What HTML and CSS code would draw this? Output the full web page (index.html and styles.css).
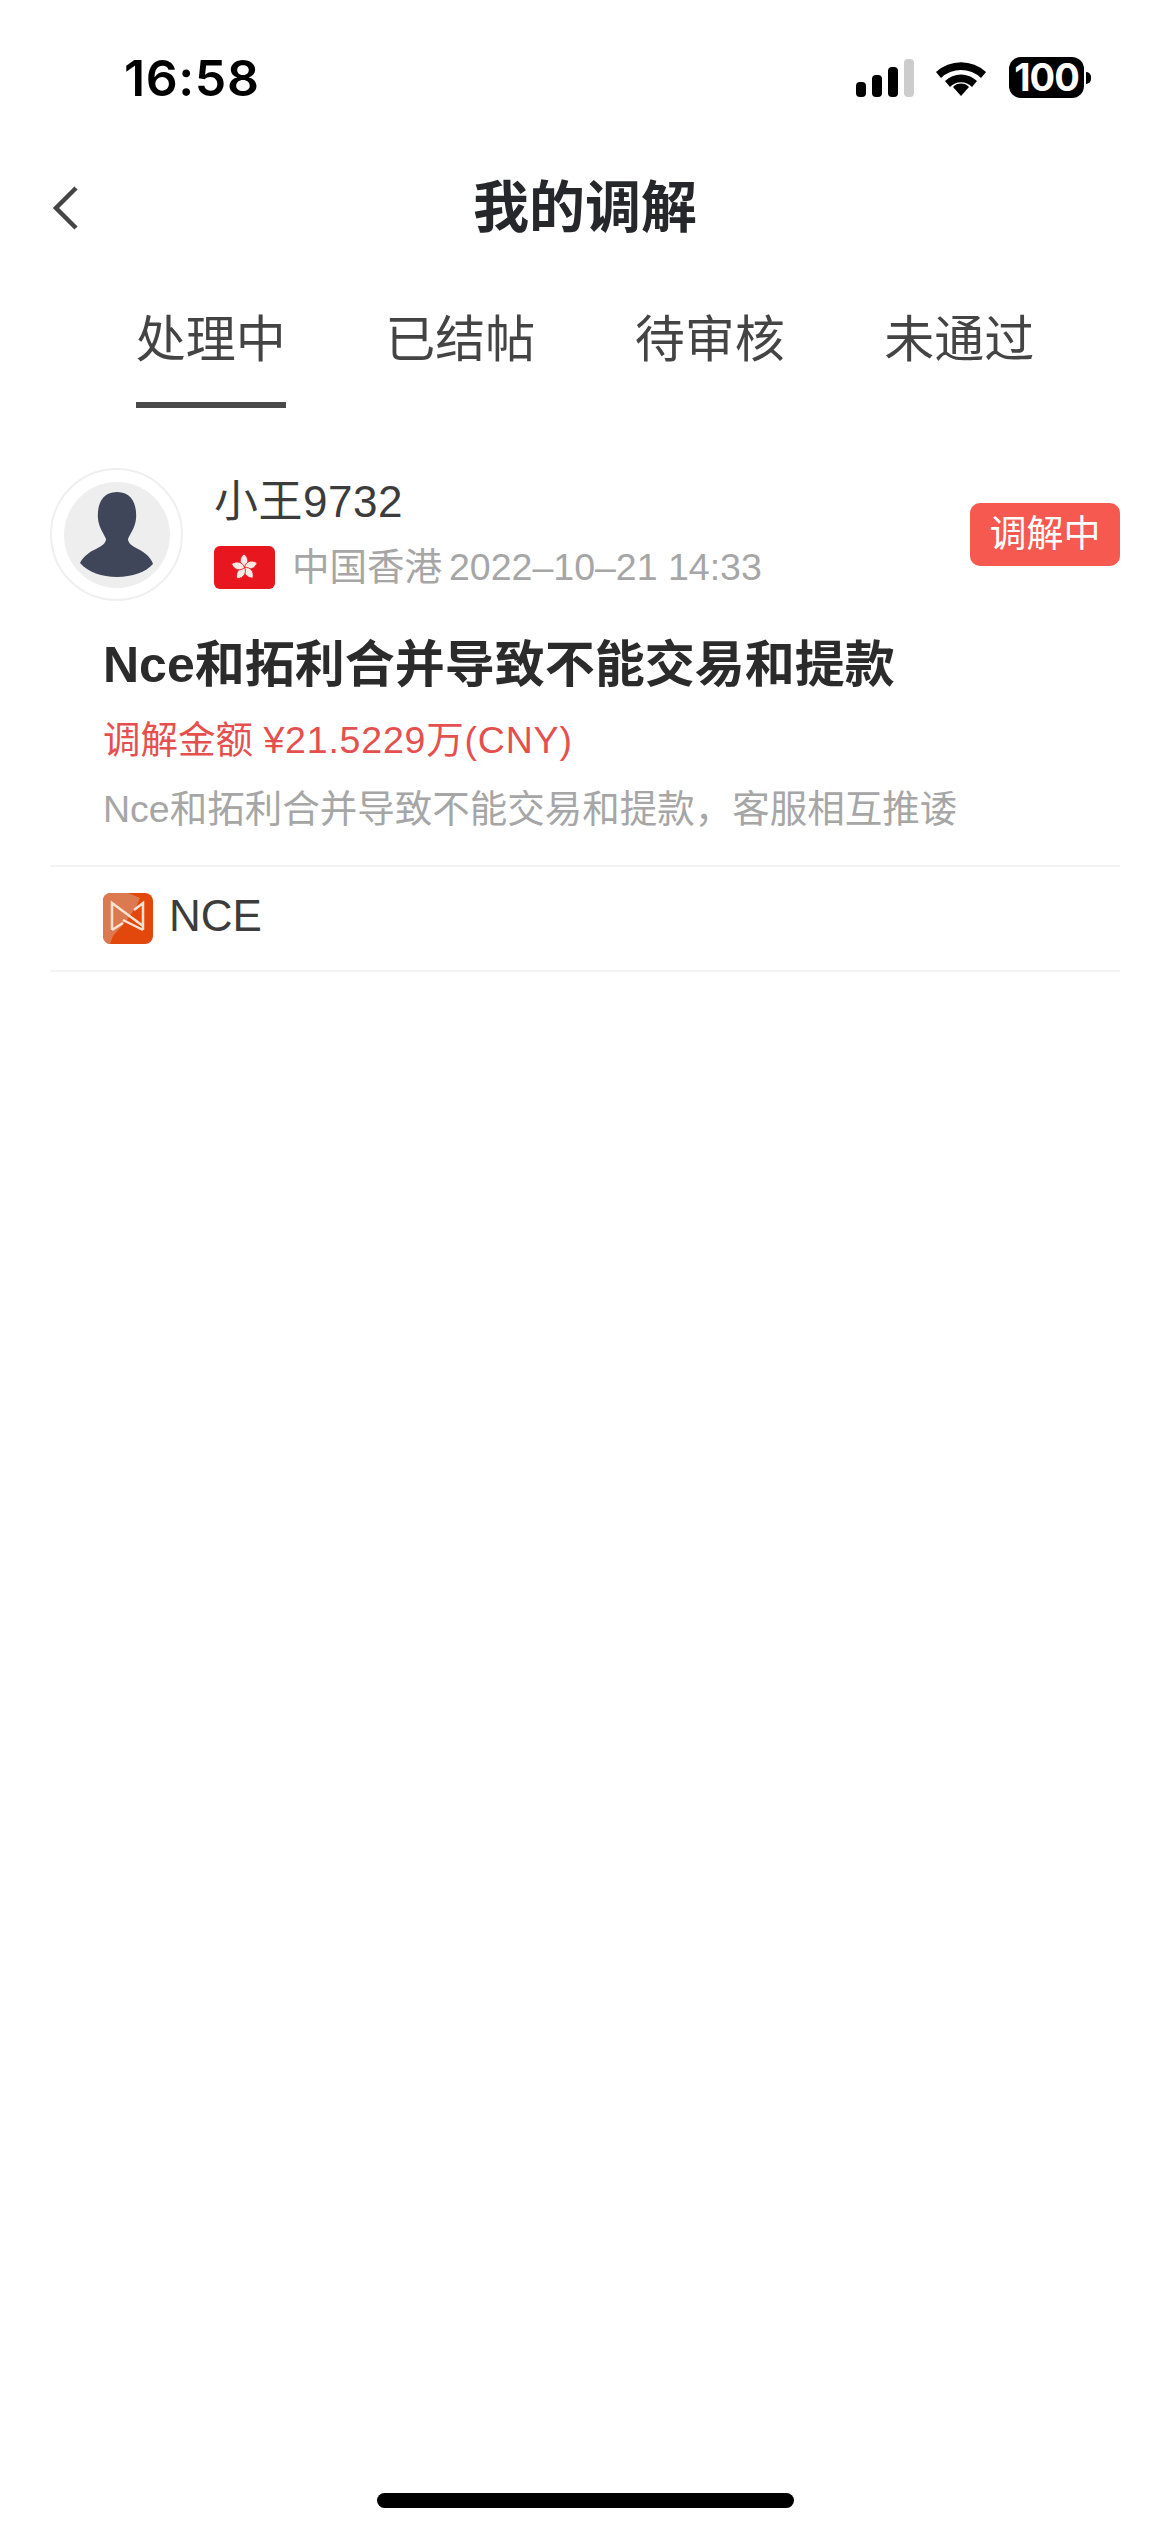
FILE: index.html
```html
<!DOCTYPE html>
<html lang="zh-CN">
<head>
    <meta charset="UTF-8">
    <meta name="viewport" content="width=device-width, initial-scale=1.0">
    <title>我的调解</title>
    <link rel="stylesheet" href="styles.css">
</head>
<body>
<div class="phone">
    <div class="status-bar">
        <span class="time">16:58</span>
        <div class="status-icons">
            <svg class="signal" width="58" height="38" viewBox="0 0 58 38">
                <rect x="0" y="23" width="10" height="15" rx="4" fill="#000"/>
                <rect x="16" y="16" width="10" height="22" rx="4" fill="#000"/>
                <rect x="32" y="8" width="10" height="30" rx="4" fill="#000"/>
                <rect x="48" y="0" width="10" height="38" rx="4" fill="#ccc"/>
            </svg>
            <svg class="wifi" width="52" height="37" viewBox="0 0 52 37">
                <path d="M1 13 A37 37 0 0 1 51 13 L46 19 A29 29 0 0 0 6 19 Z" fill="#000"/>
                <path d="M10 24 A23 23 0 0 1 42 24 L37 30 A15 15 0 0 0 15 30 Z" fill="#000" transform="translate(0 -2)"/>
                <path d="M18 28 A11 11 0 0 1 34 28 L26 37 Z" fill="#000"/>
            </svg>
            <div class="battery">
                <span class="battery-level">100</span>
                <span class="battery-nub"></span>
            </div>
        </div>
    </div>

    <div class="nav-bar">
        <svg class="back" width="27" height="44" viewBox="0 0 27 44">
            <path d="M24 2 L4 22 L24 42" fill="none" stroke="#444" stroke-width="4.5"/>
        </svg>
        <h1 class="nav-title">我的调解</h1>
    </div>

    <div class="tabs">
        <div class="tab active">处理中</div>
        <div class="tab">已结帖</div>
        <div class="tab">待审核</div>
        <div class="tab">未通过</div>
    </div>

    <div class="card">
        <div class="user-row">
            <div class="avatar">
                <div class="avatar-inner">
                    <svg width="74" height="85" viewBox="0 0 74 85">
                        <path d="M37 0 C54 0 57 16 56 27 C55 36 50 42 48 47 C48 51 52 54 58 57 C66 61 71 66 73 72 C66 80 52 85 37 85 C22 85 8 80 0 71 C3 65 9 60 16 57 C22 54 26 51 26 47 C24 42 19 36 18 27 C17 16 20 0 37 0 Z" fill="#3f4659"/>
                    </svg>
                </div>
            </div>
            <div class="user-info">
                <div class="user-name">小王9732</div>
                <div class="user-meta">
                    <svg class="flag" width="61" height="43" viewBox="0 0 61 43">
                        <rect width="61" height="43" rx="6" fill="#e8171f"/>
                        <g fill="#fbe9e6" stroke="#e8171f" stroke-width="0.8">
                            <path d="M30.5 21.5 C25.5 19 24.5 12.5 30 8 C35 12 35 18 30.5 21.5 Z"/>
                            <path d="M30.5 21.5 C25.5 19 24.5 12.5 30 8 C35 12 35 18 30.5 21.5 Z" transform="rotate(72 30.5 21.5)"/>
                            <path d="M30.5 21.5 C25.5 19 24.5 12.5 30 8 C35 12 35 18 30.5 21.5 Z" transform="rotate(144 30.5 21.5)"/>
                            <path d="M30.5 21.5 C25.5 19 24.5 12.5 30 8 C35 12 35 18 30.5 21.5 Z" transform="rotate(216 30.5 21.5)"/>
                            <path d="M30.5 21.5 C25.5 19 24.5 12.5 30 8 C35 12 35 18 30.5 21.5 Z" transform="rotate(288 30.5 21.5)"/>
                        </g>
                    </svg>
                    <span>中国香港</span>
                    <span class="meta-date">2022–10–21 14:33</span>
                </div>
            </div>
            <div class="badge">调解中</div>
        </div>

        <div class="complaint">
            <h2 class="complaint-title">Nce和拓利合并导致不能交易和提款</h2>
            <div class="complaint-amount">调解金额 <span class="amount-value">¥21.5229万(CNY)</span></div>
            <div class="complaint-desc">Nce和拓利合并导致不能交易和提款，客服相互推诿</div>
        </div>

        <div class="broker-row">
            <svg class="broker-logo" width="50" height="51" viewBox="0 0 50 51">
                <rect width="50" height="51" rx="8" fill="#e2480c"/>
                <path d="M8 0 H25 L37 5 L33 14 L24 27 L10 43 L7 51 C3 51 0 47 0 43 V8 C0 3 3 0 8 0 Z" fill="#db7a50"/>
                <path d="M9 37 V10 L40 33 M40 37 V10 L31 17 M9 37 L20 30 M20 27 L40 37" fill="none" stroke="#fbe3d4" stroke-width="2.5"/>
            </svg>
            <span class="broker-name">NCE</span>
        </div>
    </div>

    <div class="home-bar"></div>
</div>
</body>
</html>
```

FILE: styles.css
```css
* {
    box-sizing: border-box;
}
body {
    margin: 0;
    background-color: #fff;
    font-family: "Liberation Sans", "Noto Sans CJK SC", sans-serif;
}
.phone {
    height: 2532px;
    display: flex;
    flex-direction: column;
    overflow: hidden;
}

/* status bar */
.status-bar {
    height: 110px;
    padding: 50px 79px 0 124px;
    display: flex;
    justify-content: space-between;
    align-items: flex-start;
}
.time {
    font-family: Inter, sans-serif;
    font-size: 50px;
    font-weight: 600;
    letter-spacing: 0.6px;
    line-height: 56px;
    color: #000;
}
.status-icons {
    display: flex;
    align-items: center;
    padding-top: 7px;
}
.signal {
    margin-right: 21px;
}
.wifi {
    margin-right: 22px;
}
.battery {
    display: flex;
    align-items: center;
}
.battery-level {
    width: 75px;
    height: 41px;
    background-color: #000;
    border-radius: 12px;
    color: #fff;
    font-family: Inter, sans-serif;
    font-size: 38px;
    font-weight: 700;
    letter-spacing: -1px;
    line-height: 41px;
    text-align: center;
}
.battery-nub {
    width: 5px;
    height: 12px;
    margin-left: 2px;
    background-color: #000;
    border-radius: 0 6px 6px 0;
}

/* nav */
.nav-bar {
    height: 80px;
    margin-top: 58px;
    padding-left: 52px;
    display: flex;
    align-items: center;
    position: relative;
}
.nav-title {
    position: absolute;
    left: 0;
    right: 0;
    margin: 0;
    text-align: center;
    font-size: 56px;
    font-weight: 700;
    line-height: 80px;
    color: #25272b;
}

/* tabs */
.tabs {
    margin-top: 55px;
    padding: 0 86px;
    display: flex;
}
.tab {
    width: 250px;
    height: 105px;
    padding-top: 1px;
    text-align: center;
    font-size: 50px;
    line-height: 72px;
    color: #444;
    position: relative;
}
.tab.active::after {
    content: "";
    position: absolute;
    left: 50px;
    bottom: 0;
    width: 150px;
    height: 6px;
    background-color: #4a4a4a;
}

/* card */
.card {
    margin: 60px 50px 0;
}
.user-row {
    display: flex;
    align-items: center;
}
.avatar {
    width: 133px;
    height: 133px;
    border: 2px solid #efefef;
    border-radius: 50%;
    display: flex;
    align-items: center;
    justify-content: center;
    flex-shrink: 0;
}
.avatar-inner {
    width: 106px;
    height: 106px;
    border-radius: 50%;
    background-color: #eeeeee;
    display: flex;
    align-items: center;
    justify-content: center;
    overflow: hidden;
}
.user-info {
    margin-left: 31px;
    padding-bottom: 4px;
    flex: 1;
}
.user-name {
    font-size: 44px;
    letter-spacing: 0.5px;
    line-height: 56px;
    color: #3c3c3c;
}
.user-meta {
    margin-top: 13px;
    display: flex;
    align-items: center;
    gap: 17px;
    font-size: 37.5px;
    line-height: 48px;
    color: #a6a6a6;
}
.meta-date {
    margin-left: -10px;
}
.badge {
    width: 150px;
    height: 63px;
    background-color: #f5594f;
    border-radius: 10px;
    color: #fff;
    font-size: 37px;
    line-height: 63px;
    text-align: center;
    flex-shrink: 0;
}
.complaint {
    padding: 32px 0 31px 53px;
    border-bottom: 2px solid #f3f3f3;
}
.complaint-title {
    margin: 0;
    font-size: 50px;
    font-weight: 700;
    line-height: 64px;
    color: #2b2b2b;
}
.complaint-amount {
    margin-top: 18px;
    font-size: 37.5px;
    line-height: 50px;
    color: #e5504f;
}
.amount-value {
    letter-spacing: 0.8px;
}
.complaint-desc {
    margin-top: 19px;
    font-size: 37.5px;
    line-height: 50px;
    color: #a6a6a6;
}
.broker-row {
    height: 105px;
    padding-left: 53px;
    display: flex;
    align-items: center;
    gap: 16px;
    border-bottom: 2px solid #f3f3f3;
}
.broker-name {
    margin-top: -5px;
    font-size: 44px;
    line-height: 50px;
    color: #3c3c3c;
}

/* home indicator */
.home-bar {
    width: 417px;
    height: 15px;
    margin: auto auto 24px;
    background-color: #000;
    border-radius: 8px;
}
```
